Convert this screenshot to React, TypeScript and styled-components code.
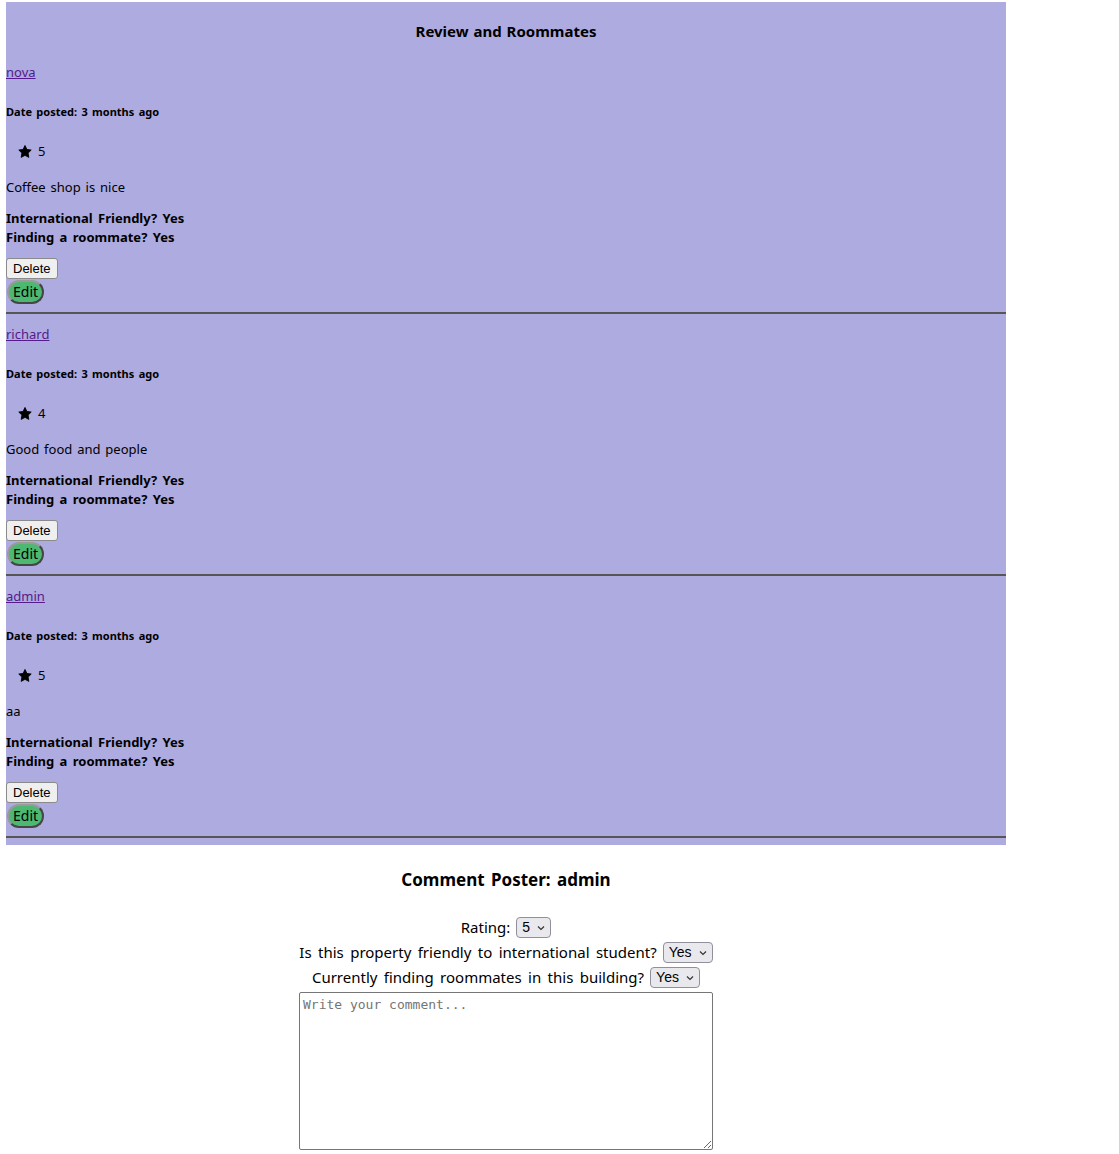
import React from "react";
import styled, { createGlobalStyle } from "styled-components";

const Global = createGlobalStyle`
  html, body { margin: 0; padding: 0; background: #ffffff; }
  body { font-family: "Noto Sans", "DejaVu Sans", sans-serif; color: #000; }
`;

const Page = styled.div`
  width: 1119px;
  padding: 2px 0 0 6px;
  box-sizing: border-box;
`;

const Panel = styled.section`
  width: 1000px;
  background: #adabdf;
  display: flex;
  flex-direction: column;
  padding-bottom: 7px;
`;

const Title = styled.h3`
  margin: 18px 0 10px;
  height: 22px;
  line-height: 22px;
  text-align: center;
  font-size: 15px;
  font-weight: 700;
  word-spacing: 1px;
`;

const Review = styled.article`
  display: flex;
  flex-direction: column;
  align-items: flex-start;
`;

const UserLink = styled.a`
  margin-top: 10px;
  line-height: 20px;
  font-size: 13px;
  color: #551a8b;
  text-decoration: underline;
`;

const DateLine = styled.h5`
  margin: 22px 0 0;
  line-height: 16px;
  font-size: 11px;
  font-weight: 700;
  word-spacing: 1.5px;
`;

const RatingRow = styled.div`
  margin-top: 21px;
  height: 20px;
  display: flex;
  align-items: center;
  gap: 6px;
  padding-left: 12px;
  font-size: 13px;
`;

const Comment = styled.p`
  margin: 16px 0 0;
  line-height: 20px;
  font-size: 13px;
  word-spacing: 1.5px;
`;

const Info = styled.div<{ $first?: boolean }>`
  margin-top: ${(p) => (p.$first ? "12px" : "0")};
  line-height: 19px;
  font-size: 13px;
  font-weight: 700;
  word-spacing: 2px;
`;

const DeleteButton = styled.button`
  margin-top: 11px;
  height: 21px;
  padding: 0 6px;
  font-family: "Liberation Sans", Arial, sans-serif;
  font-size: 13px;
  color: #000;
  background: #efefef;
  border: 1px solid #8a8a8a;
  border-radius: 3px;
`;

const EditButton = styled.button`
  margin: 1px 0 0 1px;
  height: 24px;
  padding: 0 4px;
  font-family: "Noto Sans", sans-serif;
  font-size: 14px;
  line-height: 18px;
  color: #000;
  background: #4cb871;
  border: 2px outset #9a9a9a;
  border-radius: 12px;
`;

const Divider = styled.hr`
  align-self: stretch;
  margin: 8px 0 0;
  height: 2px;
  border: none;
  background: #565656;
`;

const Form = styled.section`
  width: 1012px;
  margin-left: -6px;
  display: flex;
  flex-direction: column;
  align-items: center;
`;

const FormTitle = styled.h2`
  margin: 23px 0 0;
  line-height: 24px;
  font-size: 17px;
  font-weight: 700;
  word-spacing: 2px;
`;

const FieldRow = styled.label<{ $first?: boolean }>`
  margin-top: ${(p) => (p.$first ? "24px" : "3px")};
  display: flex;
  align-items: center;
  gap: 6px;
  height: 22px;
  font-size: 15px;
  word-spacing: 2.5px;
`;

const SelectWrap = styled.span`
  position: relative;
  display: inline-flex;
  word-spacing: 0;
`;

const Select = styled.select`
  appearance: none;
  height: 21px;
  padding: 0 20px 0 5px;
  font-family: "Liberation Sans", Arial, sans-serif;
  font-size: 14px;
  color: #000;
  background: #e9e9ed;
  border: 1px solid #8f8f9d;
  border-radius: 4px;
`;

const Chevron = styled.svg`
  position: absolute;
  right: 6px;
  top: 8px;
  width: 8px;
  height: 6px;
  pointer-events: none;
`;

const TextArea = styled.textarea`
  margin-top: 4px;
  width: 414px;
  height: 158px;
  box-sizing: border-box;
  padding: 4px 3px;
  font-family: "DejaVu Sans Mono", "Liberation Mono", monospace;
  font-size: 13px;
  border: 1px solid #767676;
  border-radius: 2px;
  &::placeholder { color: #757575; }
`;

function Star() {
  return (
    <svg width="14" height="13" viewBox="0 0 24 23">
      <path
        d="M12 0.8l3.4 7 7.6 1.1-5.5 5.4 1.3 7.6L12 18.3l-6.8 3.6 1.3-7.6L1 8.9l7.6-1.1z"
        fill="#000"
        stroke="#000"
        strokeWidth="1.5"
        strokeLinejoin="round"
      />
    </svg>
  );
}

function Picker({ value, options }: { value: string; options: string[] }) {
  return (
    <SelectWrap>
      <Select defaultValue={value}>
        {options.map((o) => (
          <option key={o}>{o}</option>
        ))}
      </Select>
      <Chevron viewBox="0 0 8 6">
        <path d="M1 1.5l3 3 3-3" fill="none" stroke="#333" strokeWidth="1.2" />
      </Chevron>
    </SelectWrap>
  );
}

const reviews = [
  { user: "nova", rating: 5, text: "Coffee shop is nice" },
  { user: "richard", rating: 4, text: "Good food and people" },
  { user: "admin", rating: 5, text: "aa" },
];

export default function App() {
  return (
    <Page>
      <Global />
      <Panel>
        <Title>Review and Roommates</Title>
        {reviews.map((r) => (
          <Review key={r.user}>
            <UserLink href="#">{r.user}</UserLink>
            <DateLine>Date posted: 3 months ago</DateLine>
            <RatingRow>
              <Star />
              <span>{r.rating}</span>
            </RatingRow>
            <Comment>{r.text}</Comment>
            <Info $first>International Friendly? Yes</Info>
            <Info>Finding a roommate? Yes</Info>
            <DeleteButton>Delete</DeleteButton>
            <EditButton>Edit</EditButton>
            <Divider />
          </Review>
        ))}
      </Panel>
      <Form>
        <FormTitle>Comment Poster: admin</FormTitle>
        <FieldRow $first>
          Rating: <Picker value="5" options={["1", "2", "3", "4", "5"]} />
        </FieldRow>
        <FieldRow>
          Is this property friendly to international student?{" "}
          <Picker value="Yes" options={["Yes", "No"]} />
        </FieldRow>
        <FieldRow>
          Currently finding roommates in this building?{" "}
          <Picker value="Yes" options={["Yes", "No"]} />
        </FieldRow>
        <TextArea placeholder="Write your comment..." />
      </Form>
    </Page>
  );
}
